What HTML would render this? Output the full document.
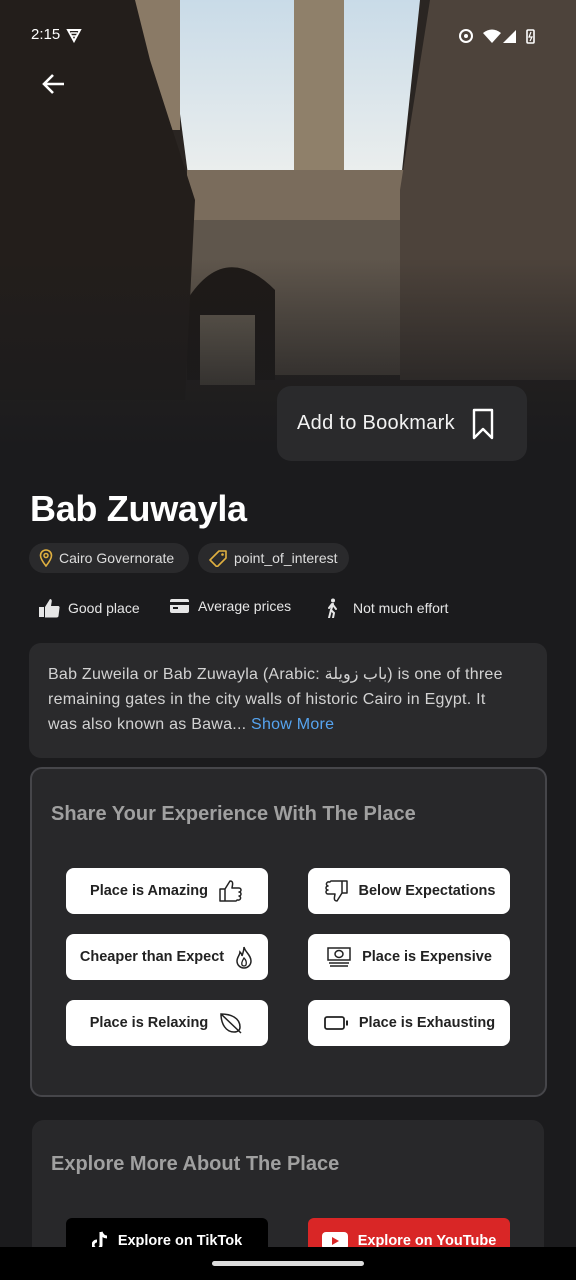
<!DOCTYPE html>
<html><head><meta charset="utf-8"><style>
*{margin:0;padding:0;box-sizing:border-box}
body{width:576px;height:1280px;background:#1b1b1d;font-family:"Liberation Sans","Noto Sans CJK SC",sans-serif;color:#fff;position:relative;overflow:hidden}
.abs{position:absolute}
.chip{position:absolute;top:543px;height:30px;border-radius:15px;background:#2a2a2c;font-size:14px;color:#ddd;display:flex;align-items:center;padding:0 10px;gap:6px}
.feat{position:absolute;top:598px;font-size:14px;color:#e6e6e6;display:flex;align-items:center;gap:8px}
.btn{position:absolute;width:202px;height:46px;background:#fff;border-radius:8px;color:#222;font-weight:bold;font-size:14.5px;display:flex;align-items:center;justify-content:center;gap:10px}
</style></head><body>
<svg class="abs" style="left:0;top:0" width="576" height="470" viewBox="0 0 576 470">
<defs>
<linearGradient id="sky" x1="0" y1="0" x2="0" y2="1"><stop offset="0" stop-color="#c9dbe8"/><stop offset="1" stop-color="#eef0ee"/></linearGradient>
<linearGradient id="fade" x1="0" y1="0" x2="0" y2="1"><stop offset="0.55" stop-color="#1b1b1d" stop-opacity="0"/><stop offset="0.95" stop-color="#1b1b1d" stop-opacity="1"/></linearGradient>
</defs>
<rect width="576" height="470" fill="#2a2522"/>
<polygon points="165,0 420,0 400,190 190,190" fill="url(#sky)"/>
<rect x="135" y="0" width="45" height="130" fill="#8a7a66"/>
<rect x="294" y="0" width="50" height="185" fill="#8f806a"/>
<rect x="187" y="185" width="220" height="190" fill="#5f564c"/>
<rect x="187" y="170" width="220" height="50" fill="#7a6c5c"/>
<path d="M187 380 L187 300 Q225 240 275 290 L275 380Z" fill="#1e1a17"/>
<rect x="200" y="315" width="55" height="70" fill="#6a6256"/>
<polygon points="400,190 430,0 576,0 576,380 400,380" fill="#4d433b"/>
<polygon points="0,0 135,0 150,60 195,200 185,400 0,400" fill="#231e1b"/>
<rect x="0" y="0" width="576" height="470" fill="url(#fade)"/>
</svg>
<div class="abs" style="left:31px;top:26px;font-size:15px">2:15</div>
<svg class="abs" style="left:66px;top:28px" width="16" height="15" viewBox="0 0 16 15"><path d="M2 2h12L8 13z" fill="none" stroke="#fff" stroke-width="2"/><path d="M5 5h6M6 8h4" stroke="#fff" stroke-width="1.5"/></svg>
<svg class="abs" style="left:458px;top:27px" width="82" height="18" viewBox="0 0 82 18"><circle cx="8" cy="9" r="6" fill="none" stroke="#fff" stroke-width="2"/><circle cx="8" cy="9" r="2" fill="#fff"/><path d="M25 6 Q34 -1 43 6 L34 16Z" fill="#fff"/><path d="M45 16 L58 3 L58 16Z" fill="#fff"/><rect x="69" y="3" width="7" height="13" rx="1" fill="none" stroke="#fff" stroke-width="1.6"/><path d="M73 5 L71 10 L74 10 L72 14" stroke="#fff" stroke-width="1.2" fill="none"/></svg>
<svg class="abs" style="left:40px;top:70px" width="28" height="28" viewBox="0 0 28 28"><path d="M24 14H5M13 5L4 14l9 9" fill="none" stroke="#fff" stroke-width="2.6"/></svg>
<div class="abs" style="left:277px;top:386px;width:250px;height:75px;border-radius:14px;background:#2a2a2c;display:flex;align-items:center;padding-left:20px;font-size:20px;color:#f2f2f2;letter-spacing:0.3px">Add to Bookmark
<svg style="margin-left:16px" width="24" height="32" viewBox="0 0 24 32"><path d="M3 2h18v28l-9-9-9 9z" fill="none" stroke="#fff" stroke-width="2.4" stroke-linejoin="round"/></svg></div>
<div class="abs" style="left:30px;top:488px;font-size:36px;font-weight:bold;letter-spacing:-0.3px">Bab Zuwayla</div>
<div class="chip" style="left:29px;width:160px"><svg width="14" height="18" viewBox="0 0 14 18"><path d="M7 17C3 12 1.5 9 1.5 6.5a5.5 5.5 0 0111 0C12.5 9 11 12 7 17z" fill="none" stroke="#e0b040" stroke-width="1.6"/><circle cx="7" cy="6.5" r="2" fill="none" stroke="#e0b040" stroke-width="1.5"/></svg>Cairo Governorate</div>
<div class="chip" style="left:198px;width:151px"><svg width="20" height="18" viewBox="0 0 20 18"><path d="M2 11L11 2h7v7l-9 9z" fill="none" stroke="#e0b040" stroke-width="1.6" stroke-linejoin="round"/><circle cx="14.5" cy="5.5" r="1.3" fill="#e0b040"/></svg>point_of_interest</div>
<div class="feat" style="left:38px"><svg width="22" height="20" viewBox="0 0 22 20"><path d="M1 9h5v10H1zM7 9l5-8c2 0 2 2 1.5 4L13 8h7c1 0 2 1 1.5 2l-1 8c0 1-1 1.5-2 1.5H7z" fill="#e6e6e6"/></svg>Good place</div>
<div class="feat" style="left:170px"><svg width="20" height="16" viewBox="0 0 20 16"><rect x="0" y="1" width="19" height="14" rx="2" fill="#e6e6e6"/><rect x="0" y="4" width="19" height="3" fill="#1b1b1d"/><rect x="3" y="9" width="5" height="2" fill="#1b1b1d"/></svg>Average prices</div>
<div class="feat" style="left:324px"><svg width="18" height="20" viewBox="0 0 18 20"><circle cx="9" cy="2.5" r="2" fill="#e6e6e6"/><path d="M9 6l-2 6 3 3-1 5M8 6l-3 4M9 7l3 4M7 12l-2 8" stroke="#e6e6e6" stroke-width="2" fill="none" stroke-linecap="round"/></svg><span style="margin-left:3px">Not much effort</span></div>
<div class="abs" style="left:29px;top:643px;width:518px;height:115px;border-radius:12px;background:#2a2a2c;padding:19px 34px 19px 19px;font-size:16px;line-height:25px;color:#d2d2d2;letter-spacing:0.25px">Bab Zuweila or Bab Zuwayla (Arabic: <span dir="rtl">باب زويلة</span>) is one of three remaining gates in the city walls of historic Cairo in Egypt. It was also known as Bawa... <span style="color:#56a4f0">Show More</span></div>
<div class="abs" style="left:30px;top:767px;width:517px;height:330px;border-radius:12px;background:#28282a;border:2px solid #46464a"></div>
<div class="abs" style="left:51px;top:803px;font-size:20px;font-weight:bold;color:#a0a0a0">Share Your Experience With The Place</div>
<div class="btn" style="left:66px;top:868px">Place is Amazing <svg width="26" height="24" viewBox="0 0 26 24"><path d="M2 10h5v12H2zM7 10l5-8c2 0 3 1 2.5 4L14 9h7a2 2 0 010 4 2 2 0 010 4 2 2 0 01-1 4h-1a2 2 0 01-1 1H7" fill="none" stroke="#222" stroke-width="1.5" stroke-linejoin="round"/></svg></div>
<div class="btn" style="left:308px;top:868px"><svg width="26" height="24" viewBox="0 0 26 24" style="transform:scale(-1,-1)"><path d="M2 10h5v12H2zM7 10l5-8c2 0 3 1 2.5 4L14 9h7a2 2 0 010 4 2 2 0 010 4 2 2 0 01-1 4h-1a2 2 0 01-1 1H7" fill="none" stroke="#222" stroke-width="1.5" stroke-linejoin="round"/></svg>Below Expectations</div>
<div class="btn" style="left:66px;top:934px">Cheaper than Expect <svg width="20" height="24" viewBox="0 0 20 24"><path d="M10 2c1 5 7 8 7 14a7 7 0 01-14 0c0-4 3-6 3-9 2 2 2 3 2 4 1-3 2-6 2-9z" fill="none" stroke="#222" stroke-width="1.5"/><path d="M10 13c2 2 3 4 2 7a2.5 2.5 0 01-4 0c-1-3 1-5 2-7z" fill="none" stroke="#222" stroke-width="1.3"/></svg></div>
<div class="btn" style="left:308px;top:934px"><svg width="26" height="24" viewBox="0 0 26 24"><rect x="2" y="3" width="22" height="12" fill="none" stroke="#222" stroke-width="1.5"/><ellipse cx="13" cy="9" rx="4" ry="3.5" fill="none" stroke="#222" stroke-width="1.5"/><path d="M3 18h20M4 21h18" stroke="#222" stroke-width="1.5"/></svg>Place is Expensive</div>
<div class="btn" style="left:66px;top:1000px">Place is Relaxing <svg width="26" height="24" viewBox="0 0 26 24"><path d="M3 3c10 0 19 4 19 13 0 3-2 5-6 5C8 21 3 13 3 3z M3 3l20 19" fill="none" stroke="#222" stroke-width="1.5"/></svg></div>
<div class="btn" style="left:308px;top:1000px"><svg width="26" height="16" viewBox="0 0 26 16"><rect x="2" y="2" width="19" height="12" rx="2" fill="none" stroke="#222" stroke-width="1.8"/><rect x="23" y="5.5" width="2" height="5" fill="#222"/></svg>Place is Exhausting</div>
<div class="abs" style="left:32px;top:1120px;width:512px;height:160px;border-radius:12px;background:#28282a"></div>
<div class="abs" style="left:51px;top:1153px;font-size:20px;font-weight:bold;color:#a0a0a0">Explore More About The Place</div>
<div class="abs" style="left:66px;top:1218px;width:202px;height:40px;border-radius:6px;background:#000;display:flex;align-items:center;justify-content:center;gap:8px;font-weight:bold;font-size:14.5px;padding-top:6px"><svg width="18" height="22" viewBox="0 0 18 22"><path d="M9 2v13a4 4 0 11-4-4" fill="none" stroke="#fff" stroke-width="3"/><path d="M9 2c1 3 3 5 6 5" fill="none" stroke="#fff" stroke-width="3"/></svg>Explore on TikTok</div>
<div class="abs" style="left:308px;top:1218px;width:202px;height:40px;border-radius:6px;background:#d92626;display:flex;align-items:center;justify-content:center;gap:10px;font-weight:bold;font-size:14.5px;padding-top:6px"><svg width="26" height="18" viewBox="0 0 26 18"><rect width="26" height="18" rx="4" fill="#fff"/><path d="M10 5l7 4-7 4z" fill="#d92626"/></svg>Explore on YouTube</div>
<div class="abs" style="left:0;top:1247px;width:576px;height:33px;background:#000"></div>
<div class="abs" style="left:212px;top:1261px;width:152px;height:5px;border-radius:3px;background:#ddd"></div>
</body></html>
